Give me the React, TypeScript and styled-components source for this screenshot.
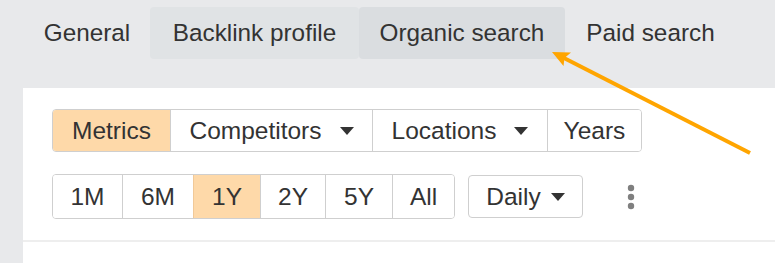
import * as React from "react";
import styled, { createGlobalStyle } from "styled-components";

const GlobalStyle = createGlobalStyle`
  html, body {
    margin: 0;
    padding: 0;
    background: #e8e9eb;
    font-family: "Liberation Sans", Arial, sans-serif;
    color: #333;
  }
`;

const Page = styled.div`
  position: relative;
  width: 775px;
  height: 263px;
  overflow: hidden;
`;

const TabBar = styled.div`
  display: flex;
  padding: 7px 0 0 24px;
`;

const Tab = styled.div<{ $w: number; $bg?: string }>`
  width: ${(p) => p.$w}px;
  height: 52px;
  display: flex;
  align-items: center;
  justify-content: center;
  border-radius: 4px;
  font-size: 24.3px;
  color: #333;
  white-space: nowrap;
  background: ${(p) => p.$bg || "transparent"};
`;

const Panel = styled.div`
  margin: 29px 0 0 23px;
  background: #fff;
  padding-top: 21px;
  height: 200px;
`;

const Controls = styled.div`
  padding-left: 29px;
  display: flex;
  flex-direction: column;
  gap: 22px;
`;

const Row = styled.div`
  display: flex;
  align-items: center;
`;

const Group = styled.div`
  display: flex;
  border: 1px solid #cfcfcf;
  border-radius: 4px;
  overflow: hidden;
`;

const Seg = styled.div<{ $w: number; $active?: boolean; $h?: number }>`
  width: ${(p) => p.$w}px;
  height: ${(p) => p.$h || 41}px;
  box-sizing: border-box;
  display: flex;
  align-items: center;
  justify-content: center;
  gap: 18px;
  font-size: 24.5px;
  color: #333;
  background: ${(p) => (p.$active ? "#fed9a9" : "#fff")};
  border-left: 1px solid ${(p) => (p.$active ? "#f1c998" : "#cfcfcf")};
  &:first-child {
    border-left: none;
  }
`;

const Caret = styled.span`
  width: 0;
  height: 0;
  border-left: 7px solid transparent;
  border-right: 7px solid transparent;
  border-top: 8px solid #333;
`;

const Select = styled.div`
  margin-left: 13px;
  width: 115px;
  height: 43px;
  box-sizing: border-box;
  border: 1px solid #cfcfcf;
  border-radius: 4px;
  display: flex;
  align-items: center;
  justify-content: center;
  gap: 10px;
  font-size: 24.5px;
  color: #333;
`;

const More = styled.div`
  margin-left: 44px;
  display: flex;
  align-items: center;
`;

const Divider = styled.div`
  margin-top: 21px;
  height: 2px;
  background: #eeeeee;
`;

const Overlay = styled.svg`
  position: absolute;
  left: 0;
  top: 0;
  pointer-events: none;
`;

export default function App() {
  return (
    <Page>
      <GlobalStyle />
      <TabBar>
        <Tab $w={126}>General</Tab>
        <Tab $w={209} $bg="#e0e3e5">Backlink profile</Tab>
        <Tab $w={206} $bg="#dadde0">Organic search</Tab>
        <Tab $w={171}>Paid search</Tab>
      </TabBar>
      <Panel>
        <Controls>
          <Row>
            <Group>
              <Seg $w={117} $active>Metrics</Seg>
              <Seg $w={202}>
                Competitors <Caret />
              </Seg>
              <Seg $w={175}>
                Locations <Caret />
              </Seg>
              <Seg $w={94}>Years</Seg>
            </Group>
          </Row>
          <Row>
            <Group>
              <Seg $w={69} $h={43}>1M</Seg>
              <Seg $w={71} $h={43}>6M</Seg>
              <Seg $w={67} $h={43} $active>1Y</Seg>
              <Seg $w={65} $h={43}>2Y</Seg>
              <Seg $w={67} $h={43}>5Y</Seg>
              <Seg $w={62} $h={43}>All</Seg>
            </Group>
            <Select>
              Daily <Caret />
            </Select>
            <More>
              <svg width="8" height="26" viewBox="0 0 8 26">
                <circle cx="4" cy="4" r="3.2" fill="#7f7f7f" />
                <circle cx="4" cy="13" r="3.2" fill="#7f7f7f" />
                <circle cx="4" cy="22" r="3.2" fill="#7f7f7f" />
              </svg>
            </More>
          </Row>
        </Controls>
        <Divider />
      </Panel>
      <Overlay width="775" height="263" viewBox="0 0 775 263">
        <line x1="750" y1="153" x2="562" y2="57" stroke="#ffa500" strokeWidth="4" />
        <path d="M552 52 L571 52.5 L564.5 58 L563.5 66 Z" fill="#ffa500" />
      </Overlay>
    </Page>
  );
}
